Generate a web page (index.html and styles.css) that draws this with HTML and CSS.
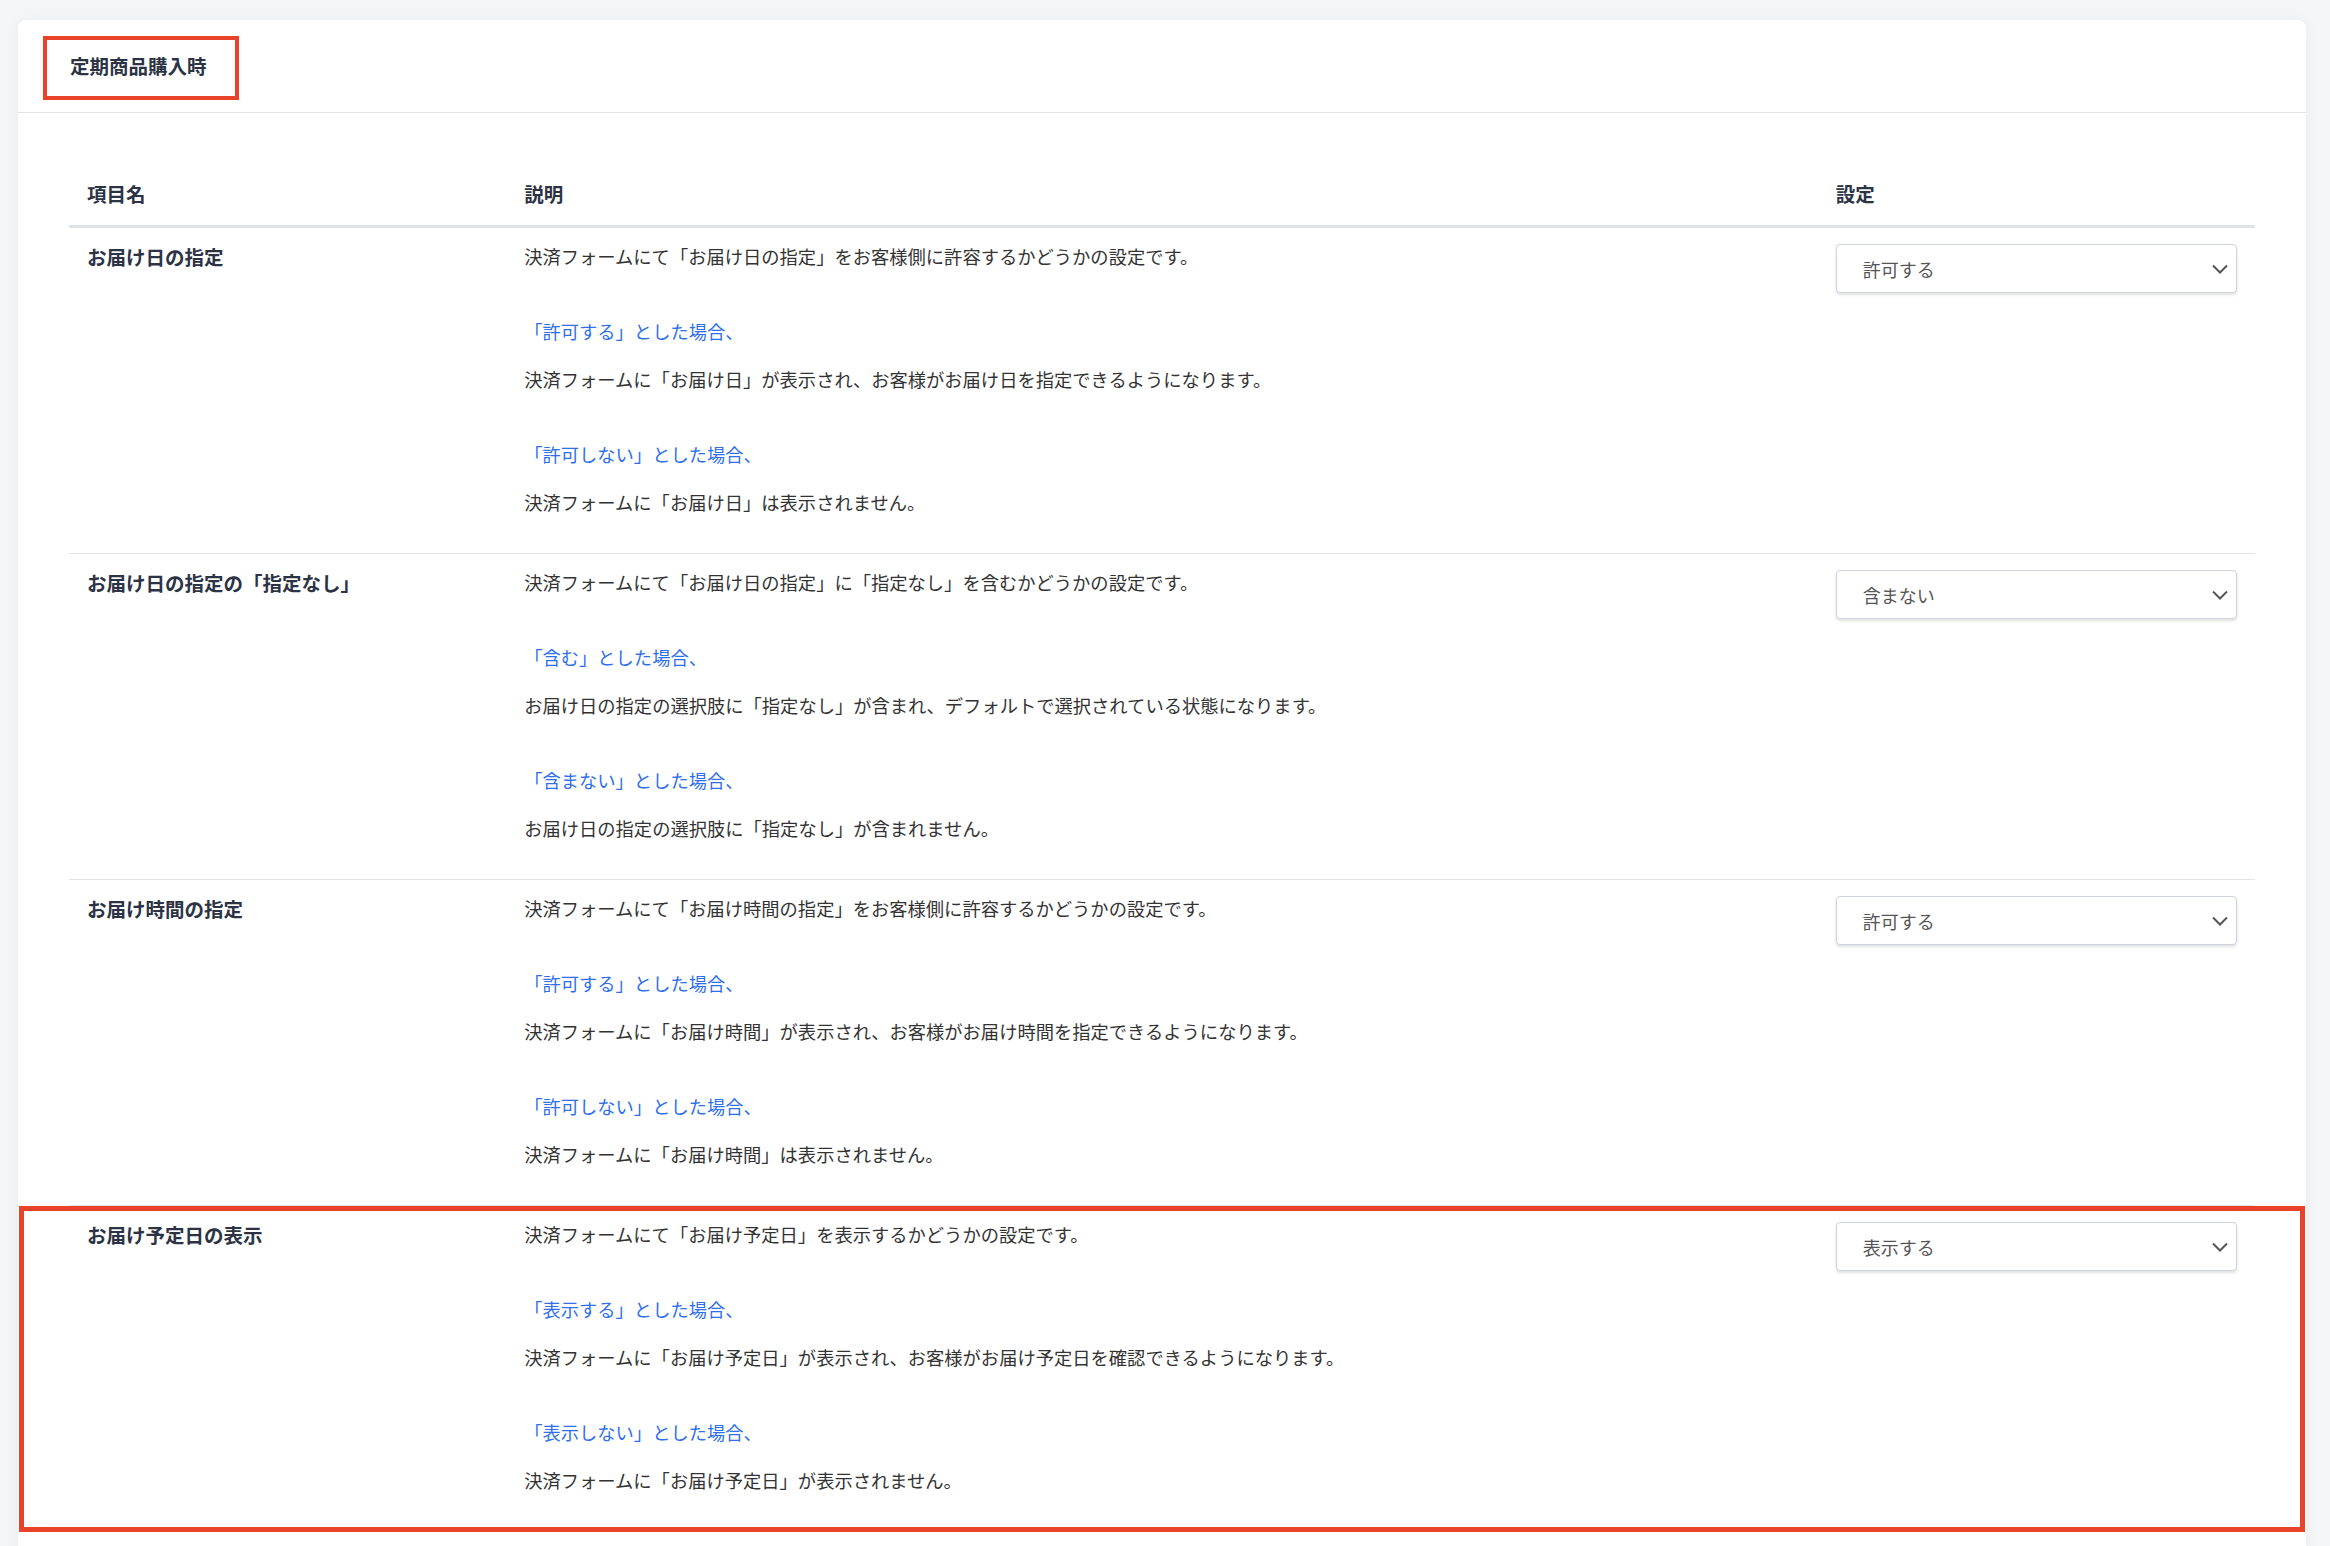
FILE: index.html
```html
<!DOCTYPE html>
<html lang="ja">
<head>
<meta charset="utf-8">
<title>定期商品購入時</title>
<link rel="stylesheet" href="styles.css">
</head>
<body>
<div class="page">
  <section class="card">
    <header class="card-head">
      <h2 class="card-title">定期商品購入時<span class="annot annot-title"></span></h2>
    </header>
    <div class="card-body">
      <div class="table">
        <div class="row row-head">
          <div class="cell th">項目名</div>
          <div class="cell th">説明</div>
          <div class="cell th">設定</div>
        </div>

        <div class="row">
          <div class="cell label">お届け日の指定</div>
          <div class="cell desc">
            <p>決済フォームにて「お届け日の指定」をお客様側に許容するかどうかの設定です。</p>
            <div class="case">
              <p class="case-title">「許可する」とした場合、</p>
              <p>決済フォームに「お届け日」が表示され、お客様がお届け日を指定できるようになります。</p>
            </div>
            <div class="case">
              <p class="case-title">「許可しない」とした場合、</p>
              <p>決済フォームに「お届け日」は表示されません。</p>
            </div>
          </div>
          <div class="cell setting">
            <div class="select"><span>許可する</span><svg class="chev" width="16" height="10" viewBox="0 0 16 10"><polyline points="1,1.5 8,8.5 15,1.5" fill="none" stroke="#555" stroke-width="2"/></svg></div>
          </div>
        </div>

        <div class="row">
          <div class="cell label">お届け日の指定の「指定なし」</div>
          <div class="cell desc">
            <p>決済フォームにて「お届け日の指定」に「指定なし」を含むかどうかの設定です。</p>
            <div class="case">
              <p class="case-title">「含む」とした場合、</p>
              <p>お届け日の指定の選択肢に「指定なし」が含まれ、デフォルトで選択されている状態になります。</p>
            </div>
            <div class="case">
              <p class="case-title">「含まない」とした場合、</p>
              <p>お届け日の指定の選択肢に「指定なし」が含まれません。</p>
            </div>
          </div>
          <div class="cell setting">
            <div class="select"><span>含まない</span><svg class="chev" width="16" height="10" viewBox="0 0 16 10"><polyline points="1,1.5 8,8.5 15,1.5" fill="none" stroke="#555" stroke-width="2"/></svg></div>
          </div>
        </div>

        <div class="row">
          <div class="cell label">お届け時間の指定</div>
          <div class="cell desc">
            <p>決済フォームにて「お届け時間の指定」をお客様側に許容するかどうかの設定です。</p>
            <div class="case">
              <p class="case-title">「許可する」とした場合、</p>
              <p>決済フォームに「お届け時間」が表示され、お客様がお届け時間を指定できるようになります。</p>
            </div>
            <div class="case">
              <p class="case-title">「許可しない」とした場合、</p>
              <p>決済フォームに「お届け時間」は表示されません。</p>
            </div>
          </div>
          <div class="cell setting">
            <div class="select"><span>許可する</span><svg class="chev" width="16" height="10" viewBox="0 0 16 10"><polyline points="1,1.5 8,8.5 15,1.5" fill="none" stroke="#555" stroke-width="2"/></svg></div>
          </div>
        </div>

        <div class="row row-marked">
          <div class="cell label">お届け予定日の表示</div>
          <div class="cell desc">
            <p>決済フォームにて「お届け予定日」を表示するかどうかの設定です。</p>
            <div class="case">
              <p class="case-title">「表示する」とした場合、</p>
              <p>決済フォームに「お届け予定日」が表示され、お客様がお届け予定日を確認できるようになります。</p>
            </div>
            <div class="case">
              <p class="case-title">「表示しない」とした場合、</p>
              <p>決済フォームに「お届け予定日」が表示されません。</p>
            </div>
          </div>
          <div class="cell setting">
            <div class="select"><span>表示する</span><svg class="chev" width="16" height="10" viewBox="0 0 16 10"><polyline points="1,1.5 8,8.5 15,1.5" fill="none" stroke="#555" stroke-width="2"/></svg></div>
          </div>
          <span class="annot annot-row"></span>
        </div>
      </div>
    </div>
  </section>
</div>
</body>
</html>
```

FILE: styles.css
```css
* { box-sizing: border-box; }

html, body {
  margin: 0;
  background: #f4f5f7;
  font-family: "Noto Sans CJK JP", "Noto Sans", sans-serif;
  color: #333;
}

.page {
  padding: 20px 24px 0 18px;
  min-height: 1546px;
}

.card {
  background: #fff;
  border-radius: 8px;
  box-shadow: 0 0 14px rgba(30, 40, 60, 0.04);
  min-height: 1540px;
}

.card-head {
  padding: 31px 52px 31px;
  border-bottom: 1px solid #e3e5e9;
}

.card-title {
  position: relative;
  display: inline-block;
  margin: 0;
  font-size: 19.5px;
  line-height: 30px;
  font-weight: 700;
  color: #2c3345;
}

.card-body {
  padding: 51px 51px 0;
}

.row {
  display: grid;
  grid-template-columns: 20% 60% 20%;
  border-bottom: 1px solid #e2e3e7;
  position: relative;
}

.row-head {
  border-bottom: 3px solid #dfe2e7;
}

.cell {
  padding: 16px 18px 33px;
  line-height: 30px;
}

.th {
  padding: 15px 18px 16px;
  font-size: 19.5px;
  font-weight: 700;
  color: #2c3345;
}

.label {
  padding-top: 14px;
  padding-bottom: 35px;
  font-size: 19.5px;
  font-weight: 700;
  color: #2c3345;
}

.desc {
  display: flex;
  flex-direction: column;
  gap: 45px;
  padding-top: 13px;
  padding-bottom: 36px;
  font-size: 18.3px;
  color: #333;
}

.desc p {
  margin: 0;
}

.case {
  display: flex;
  flex-direction: column;
  gap: 18px;
}

.case-title {
  color: #2f6fec;
}

.select {
  display: flex;
  align-items: center;
  justify-content: space-between;
  height: 49px;
  padding: 0 8px 0 26px;
  border: 1px solid #cfd3df;
  border-radius: 4px;
  background: #fff;
  box-shadow: 0 2px 3px rgba(0, 0, 0, 0.12);
  font-size: 18px;
  color: #555;
}

.chev {
  display: block;
}

.annot {
  position: absolute;
  border-style: solid;
  border-color: #e8432a;
  pointer-events: none;
}

.annot-title {
  left: -27px;
  right: -32px;
  top: -15px;
  bottom: -19px;
  border-width: 4px;
}

.annot-row {
  left: -50px;
  right: -50px;
  top: 0;
  bottom: -1px;
  border-width: 5px;
}
```
